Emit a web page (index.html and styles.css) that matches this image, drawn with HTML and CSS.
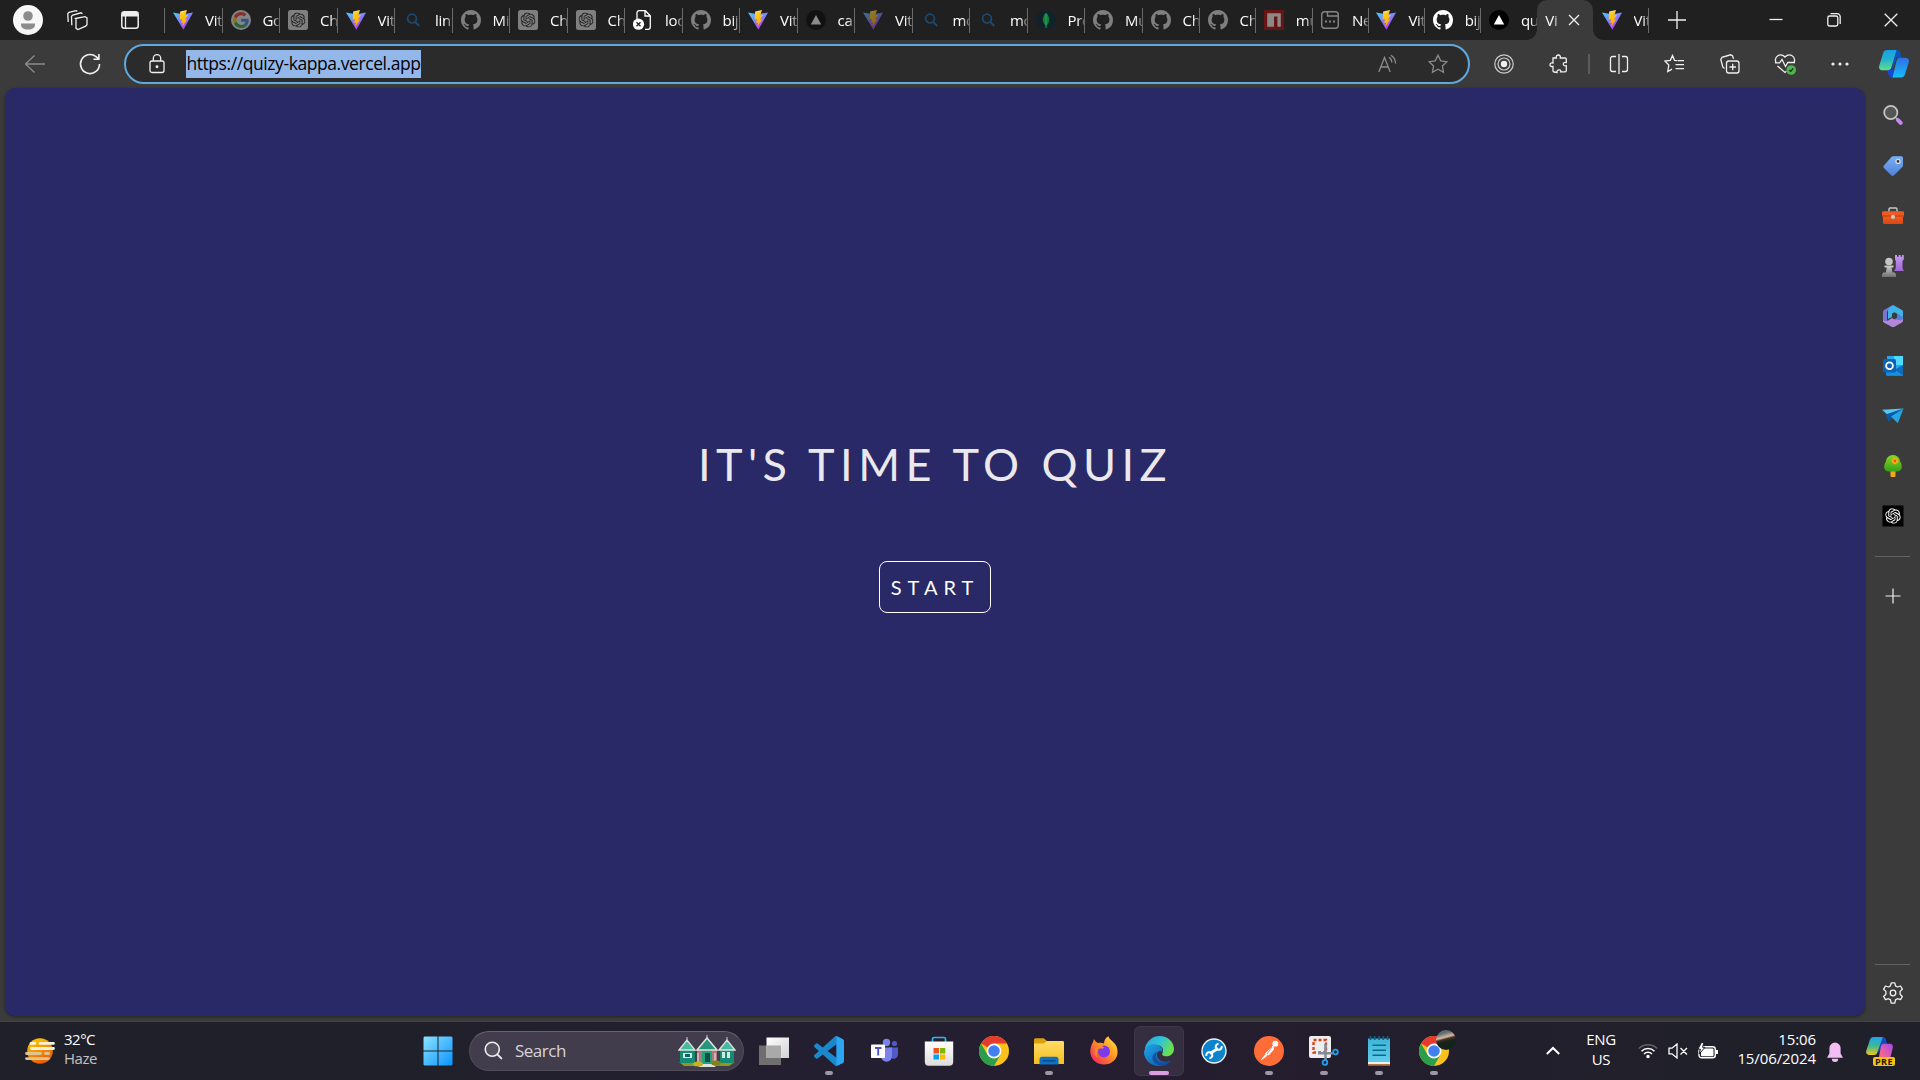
FILE: index.html
```html
<!DOCTYPE html>
<html lang="en">
<head>
<meta charset="utf-8">
<title>Vite + React</title>
<link rel="stylesheet" href="styles.css">
</head>
<body>
<svg class="defs" width="0" height="0" aria-hidden="true">
  <defs>
    <linearGradient id="viteA" x1="0" y1="0" x2=".6" y2="1"><stop offset="0" stop-color="#41d1ff"/><stop offset="1" stop-color="#bd34fe"/></linearGradient>
    <linearGradient id="viteB" x1=".4" y1="0" x2=".6" y2="1"><stop offset="0" stop-color="#ffea83"/><stop offset=".2" stop-color="#ffc81a"/><stop offset="1" stop-color="#ffa800"/></linearGradient>
    <linearGradient id="cpA" x1="0" y1="0" x2="0" y2="1"><stop offset="0" stop-color="#1a9fe8"/><stop offset=".45" stop-color="#22b0cf"/><stop offset="1" stop-color="#62e08c"/></linearGradient>
    <linearGradient id="cpB" x1="0" y1="0" x2="0" y2="1"><stop offset="0" stop-color="#2f6fe4"/><stop offset="1" stop-color="#16bdf8"/></linearGradient>
    <linearGradient id="prA" x1="0" y1="0" x2="0" y2="1"><stop offset="0" stop-color="#1ba4f5"/><stop offset=".5" stop-color="#3fb98f"/><stop offset="1" stop-color="#f2c81a"/></linearGradient>
    <linearGradient id="prB" x1="1" y1="0" x2="0" y2="1"><stop offset="0" stop-color="#a04cf0"/><stop offset=".6" stop-color="#ee5f9c"/><stop offset="1" stop-color="#ff7a5a"/></linearGradient>
    <linearGradient id="sun" x1="0" y1="0" x2=".5" y2="1"><stop offset="0" stop-color="#ffd400"/><stop offset="1" stop-color="#e85e0c"/></linearGradient>
    <linearGradient id="win" x1="0" y1="0" x2="1" y2="1"><stop offset="0" stop-color="#8be3ff"/><stop offset="1" stop-color="#0a93ff"/></linearGradient>
    <linearGradient id="fold" x1="0" y1="0" x2="0" y2="1"><stop offset="0" stop-color="#ffdd68"/><stop offset="1" stop-color="#f9bd1c"/></linearGradient>
    <linearGradient id="fox" x1="1" y1="0" x2="0" y2="1"><stop offset="0" stop-color="#fff04a"/><stop offset=".45" stop-color="#ff9220"/><stop offset="1" stop-color="#f5156c"/></linearGradient>
    <linearGradient id="edgeA" x1="0" y1="0" x2="1" y2=".4"><stop offset="0" stop-color="#2aa5dc"/><stop offset=".55" stop-color="#2fc3d8"/><stop offset="1" stop-color="#6be04e"/></linearGradient>
    <linearGradient id="edgeB" x1="0" y1="0" x2="1" y2="1"><stop offset="0" stop-color="#1fa6e6"/><stop offset="1" stop-color="#0b52a8"/></linearGradient>
    <linearGradient id="note" x1="0" y1="0" x2="0" y2="1"><stop offset="0" stop-color="#3fb4d8"/><stop offset="1" stop-color="#5fcdea"/></linearGradient>
    <linearGradient id="tag" x1="0" y1="0" x2="0" y2="1"><stop offset="0" stop-color="#78b0f5"/><stop offset="1" stop-color="#5080d8"/></linearGradient>
    <linearGradient id="box" x1="0" y1="0" x2="0" y2="1"><stop offset="0" stop-color="#f8702e"/><stop offset="1" stop-color="#dc4410"/></linearGradient>
    <linearGradient id="rook" x1="0" y1="0" x2="0" y2="1"><stop offset="0" stop-color="#c79af4"/><stop offset="1" stop-color="#a067d8"/></linearGradient>
    <linearGradient id="gray" x1="0" y1="0" x2="0" y2="1"><stop offset="0" stop-color="#d0d0d0"/><stop offset="1" stop-color="#707070"/></linearGradient>
    <linearGradient id="tree" x1="0" y1="0" x2="0" y2="1"><stop offset="0" stop-color="#8bd524"/><stop offset="1" stop-color="#35a01c"/></linearGradient>
    <linearGradient id="bag" x1="0" y1="0" x2="0" y2="1"><stop offset="0" stop-color="#fff"/><stop offset="1" stop-color="#dcdcdc"/></linearGradient>
    <linearGradient id="tv" x1="0" y1="0" x2="1" y2="1"><stop offset="0" stop-color="#fff"/><stop offset="1" stop-color="#d2d2d2"/></linearGradient>
  </defs>
  <symbol id="vite" viewBox="0 0 20 20"><path d="M0 2.4 10 4.2 20 2.4 10.4 19.8z" fill="url(#viteA)"/><path d="M14 0 7.2 1.4 6.6 9.6l2.4-.5L8.2 13l2-.6-1 4.6 5-7.8-2.4.5 3.4-5-2.9.5z" fill="url(#viteB)"/></symbol>
  <symbol id="github" viewBox="0 0 16 16"><path fill="currentColor" d="M8 0C3.58 0 0 3.58 0 8c0 3.54 2.29 6.53 5.47 7.59.4.07.55-.17.55-.38 0-.19-.01-.82-.01-1.49-2.01.37-2.53-.49-2.69-.94-.09-.23-.48-.94-.82-1.13-.28-.15-.68-.52-.01-.53.63-.01 1.08.58 1.23.82.72 1.21 1.87.87 2.33.66.07-.52.28-.87.51-1.07-1.78-.2-3.64-.89-3.64-3.95 0-.87.31-1.59.82-2.15-.08-.2-.36-1.02.08-2.12 0 0 .67-.21 2.2.82.64-.18 1.32-.27 2-.27.68 0 1.36.09 2 .27 1.53-1.04 2.2-.82 2.2-.82.44 1.1.16 1.92.08 2.12.51.56.82 1.27.82 2.15 0 3.07-1.87 3.75-3.65 3.95.29.25.54.73.54 1.48 0 1.07-.01 1.93-.01 2.2 0 .21.15.46.55.38A8.013 8.013 0 0016 8c0-4.42-3.58-8-8-8z"/></symbol>
  <symbol id="openai" viewBox="0 0 24 24"><path fill="currentColor" d="M22.2819 9.8211a5.9847 5.9847 0 0 0-.5157-4.9108 6.0462 6.0462 0 0 0-6.5098-2.9A6.0651 6.0651 0 0 0 4.9807 4.1818a5.9847 5.9847 0 0 0-3.9977 2.9 6.0462 6.0462 0 0 0 .7427 7.0966 5.98 5.98 0 0 0 .511 4.9107 6.051 6.051 0 0 0 6.5146 2.9001A5.9847 5.9847 0 0 0 13.2599 24a6.0557 6.0557 0 0 0 5.7718-4.2058 5.9894 5.9894 0 0 0 3.9977-2.9001 6.0557 6.0557 0 0 0-.7475-7.0729zm-9.022 12.6081a4.4755 4.4755 0 0 1-2.8764-1.0408l.1419-.0804 4.7783-2.7582a.7948.7948 0 0 0 .3927-.6813v-6.7369l2.02 1.1686a.071.071 0 0 1 .038.052v5.5826a4.504 4.504 0 0 1-4.4945 4.4944zm-9.6607-4.1254a4.4708 4.4708 0 0 1-.5346-3.0137l.142.0852 4.783 2.7582a.7712.7712 0 0 0 .7806 0l5.8428-3.3685v2.3324a.0804.0804 0 0 1-.0332.0615L9.74 19.9502a4.4992 4.4992 0 0 1-6.1408-1.6464zM2.3408 7.8956a4.485 4.485 0 0 1 2.3655-1.9728V11.6a.7664.7664 0 0 0 .3879.6765l5.8144 3.3543-2.0201 1.1685a.0757.0757 0 0 1-.071 0l-4.8303-2.7865A4.504 4.504 0 0 1 2.3408 7.872zm16.5963 3.8558L13.1038 8.364 15.1192 7.2a.0757.0757 0 0 1 .071 0l4.8303 2.7913a4.4944 4.4944 0 0 1-.6765 8.1042v-5.6772a.79.79 0 0 0-.407-.667zm2.0107-3.0231l-.142-.0852-4.7735-2.7818a.7759.7759 0 0 0-.7854 0L9.409 9.2297V6.8974a.0662.0662 0 0 1 .0284-.0615l4.8303-2.7866a4.4992 4.4992 0 0 1 6.6802 4.66zM8.3065 12.863l-2.02-1.1638a.0804.0804 0 0 1-.038-.0567V6.0742a4.4992 4.4992 0 0 1 7.3757-3.4537l-.142.0805L8.704 5.459a.7948.7948 0 0 0-.3927.6813zm1.0976-2.3654l2.602-1.4998 2.6069 1.4998v2.9994l-2.5974 1.4997-2.6067-1.4997Z"/></symbol>
  <symbol id="gpt" viewBox="0 0 20 20"><rect width="20" height="20" rx="2.5" fill="#7f7f7f"/><use href="#openai" x="2.5" y="2.5" width="15" height="15"/></symbol>
  <symbol id="find" viewBox="0 0 20 20"><circle cx="9" cy="8.6" r="4.4" fill="none" stroke="#1b4a72" stroke-width="1.7"/><path d="m12.2 11.9 4 4.1" stroke="#1b4a72" stroke-width="1.9"/></symbol>
  <symbol id="chrome" viewBox="0 0 30 30"><circle cx="15" cy="15" r="15" fill="#fcc21b"/><path d="M15 15 2 7.5A15 15 0 0 1 28 7.5H15z" fill="#e33b2e"/><path d="M2 7.5A15 15 0 0 0 15 30l6.5-11.2L15 15 8.6 18.8z" fill="#2c9e4b"/><circle cx="15" cy="15" r="7.4" fill="#fff"/><circle cx="15" cy="15" r="5.8" fill="#3f80ee"/></symbol>
</svg>

<div class="browser">
  <header class="titlebar">
    <div class="title-tools">
      <svg class="avatar" viewBox="0 0 30 30"><circle cx="15" cy="15" r="15" fill="#f7f7f7"/><circle cx="15" cy="11" r="4.8" fill="#8c8c8c"/><path d="M8 18.4h14c.5 4-2.500 6-7 6s-7.500-2-7-6z" fill="#8c8c8c"/></svg>
      <svg class="workspaces line" viewBox="0 0 21 21"><path d="m8.500 8.500 9.500-1.900 2 1.200v7l-1.300 1.300-7.700 3.500-2-1.300V9zM4.800 15.300 4.500 6.300l1.300-1.200L14 2.800l1.500 1M1.200 12 .8 3.500 2 2.300 9 .7l1.300.6"/></svg>
      <svg class="tab-actions" viewBox="0 0 18 18"><rect x=".8" y=".8" width="16.400" height="16.400" rx="2.500" fill="none" stroke="#eee" stroke-width="1.500"/><path d="M1 3a2 2 0 0 1 2-2h12a2 2 0 0 1 2 2v2.500H1z" fill="#eee"/><path d="M4.500 5v12" stroke="#eee" stroke-width="1.300"/></svg>
    </div>
    <nav class="tabs">
      <div class="tab"><svg><use href="#vite"/></svg><span>Vit</span></div>
      <div class="tab"><svg class="dim" viewBox="0 0 48 48"><circle cx="24" cy="24" r="24" fill="#fff" opacity=".9"/><g transform="translate(5 5) scale(.8)"><path fill="#EA4335" d="M24 9.500c3.540 0 6.710 1.220 9.210 3.600l6.850-6.850C35.900 2.380 30.470 0 24 0 14.620 0 6.510 5.380 2.560 13.220l7.980 6.190C12.430 13.720 17.740 9.500 24 9.500z"/><path fill="#4285F4" d="M46.980 24.550c0-1.570-.15-3.090-.38-4.550H24v9.020h12.940c-.58 2.960-2.260 5.480-4.780 7.180l7.730 6c4.510-4.180 7.090-10.360 7.090-17.650z"/><path fill="#FBBC05" d="M10.530 28.590a14.500 14.500 0 0 1 0-9.180l-7.980-6.190a24 24 0 0 0 0 21.560z"/><path fill="#34A853" d="M24 48c6.480 0 11.930-2.130 15.890-5.810l-7.730-6c-2.150 1.450-4.920 2.300-8.160 2.300-6.260 0-11.570-4.220-13.470-9.910l-7.980 6.190C6.510 42.620 14.620 48 24 48z"/></g></svg><span>Go</span></div>
      <div class="tab gpt"><svg><use href="#gpt"/></svg><span>Ch</span></div>
      <div class="tab"><svg><use href="#vite"/></svg><span>Vit</span></div>
      <div class="tab"><svg><use href="#find"/></svg><span>lin</span></div>
      <div class="tab hub"><svg><use href="#github"/></svg><span>Mi</span></div>
      <div class="tab gpt"><svg><use href="#gpt"/></svg><span>Ch</span></div>
      <div class="tab gpt"><svg><use href="#gpt"/></svg><span>Ch</span></div>
      <div class="tab"><svg viewBox="0 0 20 20"><path d="M4 9V2.800C4 1.500 5 .7 6 .7h6.300l5 5V17c0 1.500-1 2.300-2.300 2.300h-3M12 .7V6h5.300" fill="none" stroke="#fff" stroke-width="1.300"/><circle cx="5.500" cy="14.200" r="5.600" fill="#fff"/><path d="m3.500 12.200 4 4m0-4-4 4" stroke="#202020" stroke-width="1.300"/></svg><span>loc</span></div>
      <div class="tab hub"><svg><use href="#github"/></svg><span>bij</span></div>
      <div class="tab"><svg><use href="#vite"/></svg><span>Vit</span></div>
      <div class="tab"><svg viewBox="0 0 20 20"><circle cx="10" cy="10" r="10" fill="#111"/><path d="m10 5 5.200 9.400H4.800z" fill="#8a8a8a"/></svg><span>ca</span></div>
      <div class="tab"><svg class="dim"><use href="#vite"/></svg><span>Vit</span></div>
      <div class="tab"><svg><use href="#find"/></svg><span>mo</span></div>
      <div class="tab"><svg><use href="#find"/></svg><span>mo</span></div>
      <div class="tab"><svg viewBox="0 0 20 20"><circle cx="10" cy="10" r="10" fill="#12222a"/><path d="M10 2.500c4.500 5 4 10 0 13.500-4-3.500-4.500-8.500 0-13.500z" fill="#12803c"/><path d="M10 4v14" stroke="#37a95e" stroke-width=".9"/></svg><span>Pro</span></div>
      <div class="tab hub"><svg><use href="#github"/></svg><span>Mu</span></div>
      <div class="tab hub"><svg><use href="#github"/></svg><span>Ch</span></div>
      <div class="tab slim hub"><svg><use href="#github"/></svg><span>Ch</span></div>
      <div class="tab slim"><svg viewBox="0 0 20 20"><path fill="#671414" d="M0 0h20v20H0z"/><path fill="#8d8989" d="M3.200 3.200h13.600v13.600h-3.400V6.600H10v10.200H3.200z"/></svg><span>mu</span></div>
      <div class="tab slim"><svg viewBox="0 0 20 20" fill="none" stroke="#858585" stroke-width="1.400"><rect x="1.700" y="1.700" width="16.600" height="16.600" rx="3"/><path d="M7.500 1.700V6h10.800"/><path d="M5 11.500h2m2 0h2m2 0h2" stroke-width="1.800"/></svg><span>Ne</span></div>
      <div class="tab slim"><svg><use href="#vite"/></svg><span>Vit</span></div>
      <div class="tab slim hub live"><svg><use href="#github"/></svg><span>bij</span></div>
      <div class="tab slim"><svg viewBox="0 0 20 20"><circle cx="10" cy="10" r="10"/><path d="m10 5 5.200 9.400H4.800z" fill="#fff"/></svg><span>qu</span></div>
      <div class="tab slim active"><span>Vi</span><svg class="close line" viewBox="0 0 12 12"><path d="m1 1 10 10m0-10L1 11"/></svg></div>
      <div class="tab slim last"><svg><use href="#vite"/></svg><span>Vit</span></div>
    </nav>
    <svg class="new-tab line" viewBox="0 0 18 18"><path d="M9 0v18M0 9h18"/></svg>
    <div class="window-controls">
      <svg class="line" viewBox="0 0 14 14"><path d="M.5 6.500h13"/></svg>
      <svg class="line" viewBox="0 0 14 14"><rect x=".8" y="3" width="10" height="10" rx="1.800"/><path d="M3.500.7H10A3 3 0 0 1 13.200 4v7"/></svg>
      <svg class="line" viewBox="0 0 14 14"><path d="m.7.7 12.600 12.600m0-12.600L.7 13.300"/></svg>
    </div>
  </header>

  <div class="toolbar">
    <div class="tool"><svg class="line muted" viewBox="0 0 24 24" width="24"><path d="M22 12H2.500m9-8.500L2.500 12l9 8.500"/></svg></div>
    <div class="tool"><svg class="line" viewBox="0 0 24 24" width="24"><path d="M21.500 12A9.500 9.500 0 1 1 18 4.700l2.500 2M20.900 2v5.200h-5.400" stroke-width="1.600"/></svg></div>
    <div class="address">
      <svg class="line lock" viewBox="0 0 16 20"><rect x="1" y="7" width="14" height="11.500" rx="2"/><path d="M4.300 7V4.300a3.700 3.700 0 0 1 7.400 0V7"/><circle cx="8" cy="12.700" r=".8" fill="#fff"/></svg>
      <span class="url">https://quizy-kappa.vercel.app</span>
      <svg class="line muted read" viewBox="0 0 20 20"><path d="M.8 18 6.500 3.500 12.200 18M2.800 13h7.500M11 3.200c2 1.300 2.800 3 2.900 5.300M12.800 1.200c3.200 1.800 4.700 4.400 4.700 8.200"/></svg>
      <svg class="line muted star" viewBox="0 0 20 20"><path d="m10 1.200 2.700 5.600 6.200.9-4.500 4.300 1.100 6.200-5.500-3-5.500 3 1.100-6.200L1.100 7.700l6.200-.9z"/></svg>
    </div>
    <div class="tool first"><svg class="line" viewBox="0 0 20 20" width="20"><g stroke="#ccc" stroke-width="1.200"><circle cx="10" cy="10" r="9.200"/><circle cx="10" cy="10" r="6"/></g><circle cx="10" cy="10" r="3.200" fill="#eee" stroke="none"/></svg></div>
    <div class="tool"><svg class="line" viewBox="0 0 20 20" width="20"><path d="M4 4h3.300c-1-4 5-4 4 0H16a1.300 1.300 0 0 1 1.300 1.300V8.500c-4-.8-4 4 0 3.200V16.500a1.500 1.500 0 0 1-1.300 1.400h-4.300c1-2.800-4.400-2.800-3.700.6L5 18A1.200 1.200 0 0 1 4 16.700v-4.300c-4 1-4-4.500 0-3.400z"/></svg></div>
    <i class="tool-divider"></i>
    <div class="tool"><svg class="line" viewBox="0 0 20 20" width="20"><path d="M10 0v20M7 2.500H3.500a2 2 0 0 0-2 2v11a2 2 0 0 0 2 2H7m6-15h3.500a2 2 0 0 1 2 2v11a2 2 0 0 1-2 2H13"/></svg></div>
    <div class="tool"><svg class="line" viewBox="0 0 20 20" width="20"><path d="M13 6.700 10.500 6.300 8.500 1.500 6.300 6.300.8 7l4 4-1 6.500 4.200-2.400M13.500 6.700H20M11.500 10.700H20M11.500 14.700H20"/></svg></div>
    <div class="tool"><svg class="line" viewBox="0 0 20 20" width="20"><rect x="6.500" y="7" width="12.500" height="12" rx="2.300"/><path d="M12.700 9.700v6.600M9.400 13H16M4.500 14.500 2.800 13 .8 5.500 2 3.400l8.500-2.600 2 .9 1 3"/></svg></div>
    <div class="tool"><svg class="line" viewBox="0 0 22 22" width="22"><path d="M2 9.500C-.5 3.500 6.500-.8 11 4c4.500-4.800 11.500-.5 9 5.500M1 9.800h4.500L8 6.500l3.500 7 2.300-4H21M3.500 13l7.500 6.500 1.300-1.200"/><circle cx="17.200" cy="17" r="4.800" fill="#4eb74c" stroke="none"/><path d="m15.500 17 1.200 1.300 2.400-2.800" stroke="#222"/></svg></div>
    <div class="tool"><svg viewBox="0 0 18 4" width="18" fill="#eee"><circle cx="2" cy="2" r="1.600"/><circle cx="9" cy="2" r="1.600"/><circle cx="16" cy="2" r="1.600"/></svg></div>
    <div class="tool end"><svg viewBox="0 0 30 28" width="30"><path d="M15 0h3c2 0 3 1 3.500 3l1.200 4.700h-5L13 21z" fill="#0a56b8"/><path d="M8 20h7l2 7.500h-4c-2 0-3-1-3.500-3z" fill="#1848d0"/><path d="M8 0h9.500L12.500 17c-.7 2.200-1.700 3.300-4 3.300H4c-3.500 0-4.500-2-3.600-5L4 3.400C4.800 1 6 0 8 0z" fill="url(#cpA)"/><path d="M22 27.500h-8.500L17.500 11c.7-2.300 1.700-3.300 4-3.300H26c3.500 0 4.500 2 3.600 5L26 24.200c-.8 2.400-2 3.300-4 3.300z" fill="url(#cpB)"/></svg></div>
  </div>

  <div class="workspace">
    <main class="page">
      <h1>IT'S TIME TO QUIZ</h1>
      <button class="start">START</button>
    </main>
    <aside class="sidebar">
      <svg class="lens" viewBox="0 0 22 22"><path d="m14 14 2 2" stroke="#aaa" stroke-width="2"/><circle cx="8.800" cy="8.500" r="6.600" fill="#555" stroke="#c4c4c4" stroke-width="1.800"/><path d="m16 16.200 2.700 2.700" stroke="#c48cf0" stroke-width="4" stroke-linecap="round"/></svg>
      <svg viewBox="0 0 22 22"><path d="M11.500 1.300H19c1.200 0 2 .8 2 2V10c0 1-.2 1.500-.9 2.200l-8 8c-1 1-2 1-3 0l-7-7c-1-1-1-2 0-3L9.300 2.200c.7-.7 1.200-.9 2.200-.9z" fill="url(#tag)"/><circle cx="16" cy="6.400" r="2" fill="#333" stroke="#ddd" stroke-width="1.200"/></svg>
      <svg viewBox="0 0 22 22"><path d="M7 6.500V4.300C7 3.500 7.500 3 8.200 3h5.600c.8 0 1.200.5 1.200 1.300v2.200" fill="none" stroke="#c8c8c8" stroke-width="1.400"/><rect x="1" y="6.500" width="20" height="12.500" rx="1.500" fill="url(#box)"/><path d="M0 6.500h22v5H0z" fill="#ee5a22"/><path d="M0 11h22" stroke="#b83a08"/><rect x="9.200" y="9.800" width="3.600" height="4" rx="1.500" fill="#ccc"/></svg>
      <svg viewBox="0 0 22 22"><path d="M13 0h2v1.800h1.700V0h2v1.800h1.500V0h1.600v4.500L20.500 6v7l1.300 3h-9.500l1.500-3V6L13 4.500z" fill="url(#rook)"/><circle cx="7" cy="6.500" r="3.800" fill="#c5c5c5"/><path d="M2.500 10.500h9v2H9.500l1 5h2.300l1.200 2v2.500H0v-2.500l1.500-2h2.300l1-5H2.500z" fill="url(#gray)"/></svg>
      <svg viewBox="0 0 22 22"><path d="M10 .6 2 5C1.300 5.500 1 6 1 7v8.500c0 1 .3 1.500 1 2l4.500 2.600c-1-1-1.500-2-1.500-3.500V7.500C5 6 6 5 7 4.500z" fill="#7a74d4"/><path d="M10 .6 7.500 2.500C6.500 3.500 6 4.500 6 6v8L10 12V8.500l2.500-1.300 8.500 5V7c0-1-.3-1.500-1-2L12.500.7c-1-.6-1.700-.5-2.500-.1z" fill="#3fb2ea"/><path d="M1 14.500c1.500 2.200 4 1.500 5.500.7L10 13l2.500 1.400 3-1.800V8.900L21 12.200v3.300c0 1-.3 1.500-1 2l-7.500 4.200c-1 .5-2 .5-3 0L2 17.500c-.8-.5-1-1-1-3z" fill="#b386dc"/><path d="M15.500 9 21 12.200c0 1.500-.7 2.300-2 3l-6.500-.8 3-1.800z" fill="#4c83d8"/></svg>
      <svg viewBox="0 0 22 22"><path d="M5 1h16v19.500H5z" fill="#28a8ea"/><path d="M12 1h9v9h-9z" fill="#50d9ff"/><path d="M4 12.500 21 20.500H4z" fill="#1490df"/><path d="M21 10v10.500L12 15z" fill="#0f6cbd"/><rect x="1" y="4" width="13" height="13.500" rx="1.500" fill="#0a63b8"/><circle cx="7.500" cy="10.700" r="3.400" fill="none" stroke="#fff" stroke-width="1.800"/></svg>
      <svg viewBox="0 0 22 22"><path d="M0 4.800 21.500 3.500 8.500 12.500z" fill="#54c8f4"/><path d="m3.500 9.500 18-6-14.800 13z" fill="#0c59a4"/><path d="m9 11.500 12.500-8-5.700 14.800z" fill="#25a4e6"/></svg>
      <svg viewBox="0 0 22 22"><rect x="8.500" y="14" width="5" height="8" rx="1" fill="#f2a818"/><path d="M11 0c4 0 7 3 7 6.500 2.500 3 3 10-3 10H7c-6 0-5.500-7-3-10C4 3 7 0 11 0z" fill="url(#tree)"/><path d="M13 2.800v6.400M9.800 6h6.400" stroke="#f8b015" stroke-width="3.300"/><circle cx="13" cy="6" r="1.400" fill="#f05010"/></svg>
      <svg class="gpt-app" viewBox="0 0 22 22"><path d="M.5.500h21v21H.500z"/><use href="#openai" x="3.200" y="3.200" width="15.600" height="15.600"/></svg>
      <hr>
      <svg class="line add" viewBox="0 0 22 22"><path d="M11 3.500v15M3.500 11h15" stroke-width="1.200"/></svg>
      <hr class="bottom-rule">
      <svg class="line gear" viewBox="0 0 22 22"><path d="M9.200.8h3.600l.7 3.100 2 1.100 3-1 1.900 3.200-2.300 2.200v2.900l2.300 2.200-1.900 3.200-3-1-2 1.200-.7 3.200H9.200l-.7-3.200-2-1.200-3 1-1.900-3.200 2.300-2.200V9.400L1.600 7.200 3.500 4l3 1 2-1.100z" stroke-linejoin="round"/><circle cx="11" cy="11" r="2.800"/></svg>
    </aside>
  </div>
</div>

<footer class="taskbar">
  <div class="weather">
    <svg viewBox="0 0 30 26"><circle cx="15" cy="13" r="12.800" fill="url(#sun)"/><path d="M6 5.400h4m5 0h13.500M6.500 10.500h22" stroke="#f8f1dc" stroke-width="2.800" stroke-linecap="round"/><path d="M1.500 15.500h14m5 0h3M1.500 20.600h22" stroke="#e0c48c" stroke-width="2.800" stroke-linecap="round"/></svg>
    <div><span>32°C</span><span class="soft">Haze</span></div>
  </div>
  <div class="app"><svg viewBox="0 0 30 30"><path d="M1.500.500h13v14H.500v-13zM15.500.500h13l1 1v13h-14zM.500 15.500h14v14h-13l-1-1zM15.500 15.500h14v13l-1 1h-13z" fill="url(#win)"/></svg></div>
  <div class="search">
    <svg class="glass" viewBox="0 0 20 20"><circle cx="8.700" cy="8.700" r="7.400" fill="#55525f" stroke="#eee" stroke-width="1.700"/><path d="m14 14 4.300 4.300" stroke="#eee" stroke-width="2" stroke-linecap="round"/></svg>
    <span>Search</span>
    <svg class="houses" viewBox="0 0 58 32"><path d="M1 27h56l-6 4H6z" fill="#8a9a22"/><path d="M2 14h15v14H2zM42 14h14v14H42z" fill="#168a72"/><path d="m1 15 8-10 8 10zM41 15l8-10 8 10z" fill="#45baa0" stroke="#e6e2dc" stroke-width="1.300"/><path d="M19 14h20v15H19z" fill="#a77c7b"/><path d="M24 12h10v18H24z" fill="#23a07e"/><path d="M19 15 29 3l10 12z" fill="#27957c" stroke="#e6e2dc" stroke-width="1.500"/><path d="M29 0v4M9 2v4M49 2v4" stroke="#ccc"/><path d="M27 18h5v9h-5z" fill="#0c5145"/><path d="M5 18h9v5H5zM44 17h3v6h-3zM49 17h3v6h-3z" fill="#cceee2"/><path d="M7 19h5v3H7z" fill="#165e67"/><path d="M20 18v10M37 18v10" stroke="#e2c2c2" stroke-width="1.500"/><path d="M25 29h9l4 3H20z" fill="#dfe2da"/><ellipse cx="20" cy="29" rx="5" ry="2.500" fill="#c5b222"/><ellipse cx="38" cy="28" rx="5" ry="2.500" fill="#7f8418"/></svg>
  </div>
  <div class="app"><svg viewBox="0 0 30 30"><path d="M0 9.500h22V29H0z" fill="#6f6f6f"/><path d="M7.500 1.500H30V22H7.500z" fill="url(#tv)"/><path d="M7.500 9.500H22V22H7.500z" fill="#a9a9a9"/></svg></div>
  <div class="app open"><svg viewBox="0 0 24 24"><path fill="#1b87cd" d="M23.150 2.587L18.210.21a1.494 1.494 0 0 0-1.705.29l-9.460 8.630-4.120-3.128a.999.999 0 0 0-1.276.057L.327 7.261A1 1 0 0 0 .326 8.740L3.899 12 .326 15.260a1 1 0 0 0 .001 1.479L1.650 17.940a.999.999 0 0 0 1.276.057l4.120-3.128 9.460 8.630a1.492 1.492 0 0 0 1.704.29l4.942-2.377A1.500 1.500 0 0 0 24 20.060V3.939a1.500 1.500 0 0 0-.85-1.352zm-5.146 14.861L10.826 12l7.178-5.448v10.896z"/><path d="M18 0v24l5.200-2.500.8-1.500V4l-.9-1.500z" fill="#2ba6f2"/></svg></div>
  <div class="app"><svg viewBox="0 0 30 30"><circle cx="17.500" cy="6.500" r="3.700" fill="#7b83eb"/><circle cx="25.500" cy="7.500" r="2.600" fill="#5059c9"/><path d="M20 11.500h9V18c0 4-3 5.500-6 4.500z" fill="#5059c9"/><path d="M12 11.500h11V20c0 7.500-11 7.500-11 0z" fill="#7b83eb"/><rect x="2" y="8.500" width="14" height="13.500" rx=".8" fill="#fff"/><path d="M6 12h6.500M9.200 12v7.500" stroke="#4c55bd" stroke-width="1.900"/></svg></div>
  <div class="app"><svg viewBox="0 0 30 30"><path d="M8.500 7V3c0-1 .5-1.500 1.500-1.500h10c1 0 1.500.5 1.500 1.500v4" fill="none" stroke="#29b9f2" stroke-width="1.700"/><path d="M.8 5.500h28.400v20c0 3-1.200 4.300-4 4.300H4.800c-2.800 0-4-1.300-4-4.300z" fill="url(#bag)"/><path d="M9.500 12H15v5.500H9.500z" fill="#f25022"/><path d="M16 12h5.300v5.500H16z" fill="#7fba00"/><path d="M9.500 18.500H15v5H9.500z" fill="#00a4ef"/><path d="M16 18.500h5.300v5H16z" fill="#ffb900"/></svg></div>
  <div class="app"><svg><use href="#chrome"/></svg></div>
  <div class="app open"><svg viewBox="0 0 30 30"><path d="M0 4c0-1 .7-1.800 1.700-1.800h8L13 5h13v8H0z" fill="#dda10c"/><path d="M0 7.500h10L13 5h15.500c1 0 1.500.6 1.500 1.500V28H0z" fill="url(#fold)"/><path d="M5.500 28.500v-5.300c0-1.500 1-2.500 2.500-2.500h14c1.500 0 2.500 1 2.500 2.500v5.300z" fill="#0f70c4"/><path d="M9 24.800h12" stroke="#06427c" stroke-width="1.200" stroke-linecap="round"/></svg></div>
  <div class="app"><svg viewBox="0 0 30 30"><path d="M5 3c1 2 2 3 4 4 3-.5 4 0 6 .5 0-3 1.500-6 4.500-7.300 1 4 6.500 5.500 8.300 11C31 21 24 28.500 15 28.500S0 21 1.500 13C2 9 4 7 5 3z" fill="url(#fox)"/><circle cx="15" cy="15.500" r="6" fill="#7c3ae8"/><path d="M9 13c2.500-1 4 0 6-1-1-2-4-3-6.500-1.500C4 13 5 20 9 22c-1.500-3-2-6 0-9z" fill="#ff8a22"/></svg></div>
  <div class="app current"><svg viewBox="0 0 30 30"><path d="M1 12C3 4.500 9 0 15.500 0 24 0 30 6 30 13c0 4.500-3.500 7.300-7.500 7.300-3.800 0-5.200-1.500-4-3.300C21 12 16 8.500 11 9 6 9.500 3 11.500 1 17z" fill="url(#edgeA)"/><path d="M0 15.500C2 10 7 7.500 12 8.500c4 .7 7 3.500 6.500 7.500-3-2.500-7 .5-5 5.500 1.700 4.200 8 5.700 13.500 3C24 28.500 19 30 15 30 6 30 0 23.500 0 15.500z" fill="url(#edgeB)"/><path d="M13.300 16c-3 5 0 10 5.700 10.500 3 .2 6-1 8-2-5 7-14 6.500-17.500 1-2.500-4-.5-8.500 3.800-9.500z" fill="#12489c" opacity=".8"/></svg></div>
  <div class="app"><svg viewBox="0 0 30 30"><circle cx="15" cy="15" r="12" fill="#0b84cd" stroke="#f0f0f0" stroke-width="1.400"/><path d="m11 17.500 8-5" stroke="#fff" stroke-width="2.800"/><path d="M22.600 10a3 3 0 1 1-3-2.200M7.400 20a3 3 0 1 1 3 2.200" fill="none" stroke="#fff" stroke-width="2"/></svg></div>
  <div class="app open"><svg viewBox="0 0 30 30"><circle cx="15" cy="15" r="15" fill="#ff6c37"/><circle cx="21.300" cy="7.700" r="2.900" fill="#fff"/><path d="m19 10-7.500 7.800 3 1.200 5-5.500zM12 18l-4.500 5.500 5-3.500z" fill="#fff" stroke="#fff"/><path d="m18 11-5 7" stroke="#ff6c37" stroke-width=".9"/></svg></div>
  <div class="app open"><svg viewBox="0 0 30 30"><rect width="22" height="22" rx="2" fill="#eee"/><rect x="4.500" y="4" width="12.500" height="12.500" fill="none" stroke="#d8421c" stroke-width="2.400" stroke-dasharray="3 2"/><path d="M16.500 8v16M9 17.300h15" stroke="#858b95" stroke-width="2.600"/><circle cx="16" cy="26.500" r="2.300" fill="none" stroke="#1ca0f0" stroke-width="1.800"/><circle cx="26.500" cy="16" r="2.300" fill="none" stroke="#1ca0f0" stroke-width="1.800"/></svg></div>
  <div class="app open"><svg viewBox="0 0 30 30"><path d="M4 26h22v4H4z" fill="#a9561b"/><path d="M4 25.500h22v2.700H4z" fill="#eee"/><path d="M4 2.500h22V26H4z" fill="url(#note)"/><path d="M6.500 0v4M10.700 0v4M15 0v4m4.300-4v4m4.200-4v4" stroke="#11607d" stroke-width="1.700"/><path d="M8.500 9.200h13.500M8.500 14.200h13.500M8.500 19.200h13.500" stroke="#0d688a" stroke-width="1.600"/></svg></div>
  <div class="app open profile"><svg><use href="#chrome"/></svg><i class="photo"></i></div>

  <div class="tray">
    <svg class="chevron" viewBox="0 0 14 14"><path d="m.8 10 6.200-6 6.200 6" fill="none" stroke="#fff" stroke-width="2"/></svg>
    <div class="lang"><span>ENG</span><span>US</span></div>
    <svg class="wifi" viewBox="0 0 20 16" fill="none" stroke="#fff" stroke-width="1.500"><path d="M.8 5.500a13 13 0 0 1 18.400 0" stroke="#62626a"/><path d="M3.500 8.300a9.200 9.200 0 0 1 13 0M6 11a5.600 5.600 0 0 1 8 0"/><circle cx="10" cy="13.500" r="1" fill="#fff"/></svg>
    <svg class="mute" viewBox="0 0 20 16" fill="none" stroke="#fff" stroke-width="1.300"><path d="M1 5.200h3L9 1v14l-5-4.200H1zM12.500 5l6.500 6.500M19 5l-6.500 6.500"/></svg>
    <svg class="battery" viewBox="0 0 20 16"><rect x="1" y="3.800" width="16.300" height="11" rx="2.500" fill="none" stroke="#fff" stroke-width="1.400"/><rect x="3" y="5.500" width="12.500" height="7.700" rx="1" fill="#fff"/><path d="M18 7h2v4h-2z" fill="#fff"/><path d="M3.400-.5 0 6.200h2.400L1.200 11l5.800-6.700H4.500L6-.5z" fill="#fff" stroke="#20202a" stroke-width="1"/></svg>
    <div class="clock"><span>15:06</span><span>15/06/2024</span></div>
    <svg class="bell" viewBox="0 0 16 20"><path d="M8 .5a5.600 5.600 0 0 1 5.600 5.600v5.400L16 15.700H0l2.400-4.200V6.100A5.600 5.600 0 0 1 8 .5z" fill="#f1bdf2"/><path d="M4.800 16.700h6.400a3.200 3.200 0 0 1-6.400 0z" fill="#f1bdf2"/></svg>
    <div class="copilot"><svg viewBox="0 0 30 28"><path d="M13 0h5c2 0 3 1 3.500 3l1.200 4.500h-4.200L13 18z" fill="#1748c8"/><path d="M8 0h10L12 17c-.7 1.700-1.500 2.300-3.500 2.300H4c-3.500 0-4.500-2-3.600-5L4 3.400C4.800 1 6 0 8 0z" fill="url(#prA)"/><path d="M22 26h-9L16 10c.5-1.700 1.500-2.700 3.500-2.700H25c3.500 0 4.500 2 3.600 5L26 23z" fill="url(#prB)"/></svg><b>PRE</b></div>
  </div>
</footer>
</body>
</html>
```
FILE: styles.css
```css
* { box-sizing: border-box; }
html, body { margin: 0; height: 100%; overflow: hidden; }
body {
  display: flex;
  flex-direction: column;
  background: #3b3b3b;
  color: #fff;
  font-family: "Open Sans", "Noto Sans", sans-serif;
}
svg { display: block; flex: none; }
.defs { position: absolute; }
.line { fill: none; stroke: #f0f0f0; stroke-width: 1.3; }
.line.muted { stroke: #8d8d8d; }

.browser { display: flex; flex-direction: column; height: 1021px; }

/* title bar */
.titlebar { display: flex; align-items: center; height: 40px; background: #202020; }
.title-tools { display: flex; align-items: center; width: 164px; padding-left: 13px; }
.avatar { width: 30px; height: 30px; }
.workspaces { width: 21px; height: 21px; margin-left: 24px; }
.tab-actions { width: 18px; height: 18px; margin-left: 33px; }
.tabs { display: flex; height: 40px; }
.tab {
  position: relative;
  display: flex;
  align-items: center;
  width: 57.5px;
  padding-left: 9px;
  overflow: hidden;
  font-size: 15px;
  letter-spacing: -.3px;
  white-space: nowrap;
}
.tab::before, .tab.last::after {
  content: "";
  position: absolute;
  left: 0;
  top: 8px;
  width: 1px;
  height: 25px;
  background: #6a6a6a;
}
.tab.last::before { display: none; }
.tab.last::after { left: auto; right: 0; }
.tab svg { width: 20px; height: 20px; }
.tab span {
  flex: 1;
  min-width: 0;
  margin-left: 12px;
  overflow: hidden;
  -webkit-mask-image: linear-gradient(90deg, #000 60%, #0004);
  mask-image: linear-gradient(90deg, #000 60%, #0004);
}
.tab.slim { width: 56.3px; padding-left: 8.5px; }
.tab .dim { opacity: .5; }
.tab.gpt svg { color: #202020; }
.tab.hub svg { color: #7f7f7f; }
.tab.live svg { color: #fff; }
.tab.active {
  overflow: visible;
  background: #3b3b3b;
  border-radius: 10px 10px 0 0;
}
.tab.active::before, .tab.active::after {
  content: "";
  position: absolute;
  top: auto;
  bottom: 0;
  left: -10px;
  width: 10px;
  height: 10px;
  background: radial-gradient(circle at 0 0, transparent 9.5px, #3b3b3b 10px);
}
.tab.active::after { left: 100%; background: radial-gradient(circle at 100% 0, transparent 9.5px, #3b3b3b 10px); }
.tab.active span { flex: none; width: 14px; margin-left: 0; }
.tab .close { width: 12px; height: 12px; margin-left: 9px; }
.new-tab { width: 18px; height: 18px; margin-left: 19px; }
.window-controls { display: flex; gap: 43.500px; margin-left: auto; padding-right: 22px; }
.window-controls svg { width: 14px; height: 14px; }

/* toolbar */
.toolbar { display: flex; align-items: center; height: 48px; padding-left: 7.5px; }
.tool { display: flex; justify-content: center; width: 55.2px; }
.tool.first { margin-left: 6px; }
.tool.end { width: 52.5px; }
.tool-divider { width: 2px; height: 20px; margin: 0 1.5px; background: #5b5b5b; }
.address {
  flex: 1;
  display: flex;
  align-items: center;
  height: 40px;
  margin-left: 6px;
  border: 2.5px solid #5fa9df;
  border-radius: 20px;
  background: #2b2b2b;
}
.lock { width: 16px; height: 20px; margin-left: 23.500px; }
.url {
  width: 235px;
  height: 28px;
  margin: 0 auto 0 21px;
  background: #94b7e9;
  color: #000;
  font-size: 17.5px;
  line-height: 27px;
  letter-spacing: -.42px;
  white-space: nowrap;
}
.read { width: 20px; height: 20px; }
.star { width: 20px; height: 20px; margin: 0 20px 0 30px; }

/* page and sidebar */
.workspace { display: flex; flex: 1; }
.page {
  display: flex;
  flex-direction: column;
  align-items: center;
  width: 1860px;
  height: 928px;
  margin-left: 5px;
  padding-top: 349px;
  border-radius: 10px;
  background: #282966;
  box-shadow: 0 1px 3px #0006;
  font-family: Lato, sans-serif;
}
.page h1 {
  margin: 0;
  color: #ebe8ed;
  font-size: 45px;
  font-weight: 400;
  line-height: 54px;
  letter-spacing: 5.450px;
}
.start {
  width: 112px;
  height: 52px;
  margin-top: 70px;
  padding: 0;
  border: 1px solid #fff;
  border-radius: 8px;
  background: none;
  color: #fff;
  font: 400 20px Lato, sans-serif;
  letter-spacing: 6px;
}
.sidebar {
  flex: 1;
  display: flex;
  flex-direction: column;
  align-items: center;
  padding-top: 16px;
}
.sidebar svg { width: 22px; height: 22px; margin-bottom: 28px; }
.sidebar .lens { margin-bottom: 29px; }
.sidebar .gpt-app { color: #fff; }
.sidebar hr { width: 35px; height: 1px; margin: 1px 0 28px; border: 0; background: #636363; }
.sidebar .bottom-rule { margin: auto 0 17px; }
.sidebar .gear { margin-bottom: 17px; }

/* taskbar */
.taskbar {
  display: flex;
  align-items: center;
  height: 59px;
  padding-bottom: 1px;
  border-top: 1px solid #42424a;
  background: linear-gradient(90deg, #20202a 0, #20202a 22%, #231f31 38%, #241d2f 62%, #20202a 88%);
  font-size: 15px;
  line-height: 19.500px;
  letter-spacing: -.5px;
}
.weather { display: flex; align-items: center; width: 410px; padding-left: 25px; }
.weather svg { width: 30px; height: 26px; }
.weather div { margin-left: 9px; padding-bottom: 3px; }
.weather span, .lang span, .clock span { display: block; }
.soft { color: #c2c2c6; }
.app {
  position: relative;
  display: flex;
  align-items: center;
  justify-content: center;
  width: 55px;
  height: 50px;
}
.app svg { position: relative; width: 30px; height: 30px; }
.app.open::after, .app.current::after {
  content: "";
  position: absolute;
  bottom: 1px;
  width: 8px;
  height: 4px;
  border-radius: 2px;
  background: #9b99a3;
}
.app.current { width: 50px; margin: 0 2.5px; border: 1px solid #ffffff0c; border-radius: 6px; background: #352d40; }
.app.current::after { bottom: 0; width: 20px; background: #dc9ce3; }
.photo {
  position: absolute;
  top: 4px;
  right: 6px;
  width: 20px;
  height: 20px;
  border-radius: 50%;
  background: linear-gradient(165deg, #5c6d70 20%, #d5b9a0 38%, #493025 46%, #13221b 58%);
}
.search {
  display: flex;
  align-items: center;
  width: 275px;
  height: 40px;
  margin: 0 2.5px 0 4px;
  padding: 0 7px 0 14px;
  border: 1px solid #504c5a;
  border-top-color: #67636f;
  border-radius: 20px;
  background: #423d4c;
  color: #d6d4d9;
  font-size: 17px;
}
.glass { width: 19px; height: 19px; }
.search span { margin: 0 auto 0 12px; }
.houses { width: 58px; height: 32px; }
.tray { display: flex; align-items: center; margin-left: auto; padding-right: 13px; }
.chevron { width: 14px; height: 14px; margin: 0 10px; }
.lang { width: 62px; padding-bottom: 2px; text-align: center; letter-spacing: -.3px; }
.wifi { width: 20px; height: 16px; margin: 0 6px; }
.mute { width: 20px; height: 16px; margin: 0 4px; }
.battery { width: 20px; height: 16px; margin: 0 6px; overflow: visible; }
.clock { width: 92px; padding-bottom: 3px; text-align: right; letter-spacing: -.1px; }
.bell { width: 16px; height: 20px; margin: 2px 11px 0; }
.copilot { position: relative; width: 30px; height: 28px; margin: 0 11px 0 12px; }
.copilot svg { width: 28px; height: 26px; }
.copilot b {
  position: absolute;
  left: 7px;
  bottom: -1px;
  width: 22px;
  height: 9px;
  border-radius: 2px;
  background: #f8c30c;
  color: #1c1a10;
  font-size: 9px;
  line-height: 9px;
  letter-spacing: .5px;
  text-align: center;
}
```
